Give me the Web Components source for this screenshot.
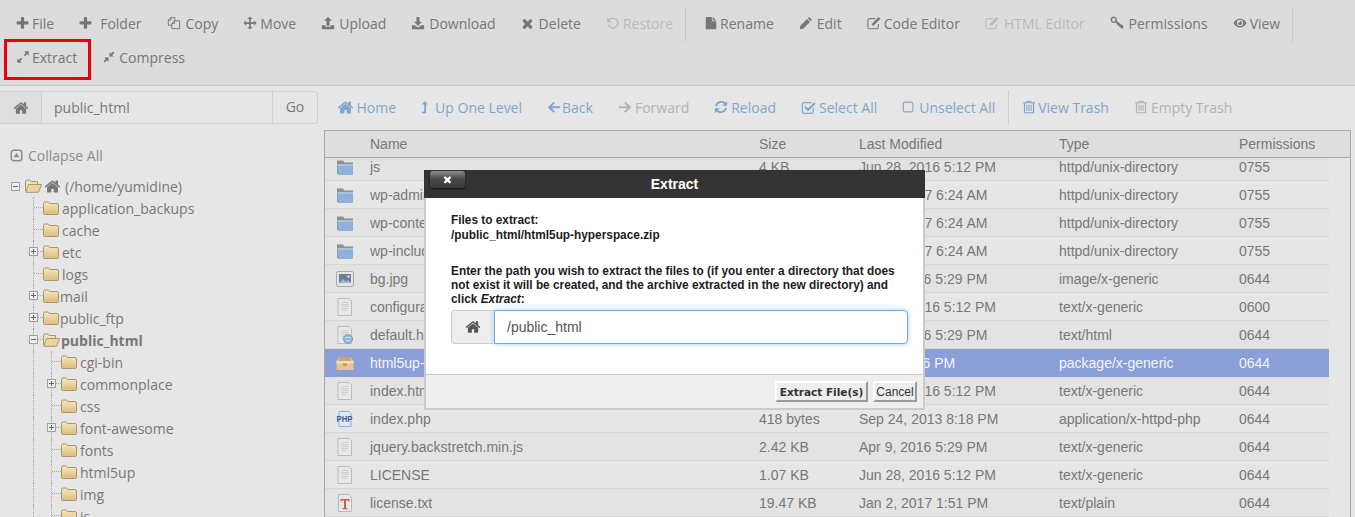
<!DOCTYPE html>
<html lang="en">
<head>
<meta charset="utf-8">
<title>File Manager</title>
<style>
  html, body { margin: 0; height: 517px; overflow: hidden; background: #e6e6e6; }
  body { font-family: "Open Sans", sans-serif; font-size: 14px; color: #777; position: relative; }
  fm-main { height: 387px; }
</style>
</head>
<body>
<fm-toolbar>
  <tool-item icon="plus" w="16" s="15">File</tool-item>
  <tool-item icon="plus" w="21" s="15">Folder</tool-item>
  <tool-item icon="copy" w="19">Copy</tool-item>
  <tool-item icon="move" w="17">Move</tool-item>
  <tool-item icon="upload" w="18">Upload</tool-item>
  <tool-item icon="download" w="18">Download</tool-item>
  <tool-item icon="times" w="18" s="15">Delete</tool-item>
  <tool-item icon="undo" w="17" disabled>Restore</tool-item>
  <tool-sep></tool-sep>
  <tool-item icon="file" w="16">Rename</tool-item>
  <tool-item icon="pencil" w="18">Edit</tool-item>
  <tool-item icon="edit" w="17">Code Editor</tool-item>
  <tool-item icon="edit" w="19" disabled>HTML Editor</tool-item>
  <tool-item icon="key" w="19">Permissions</tool-item>
  <tool-item icon="eye" w="17">View</tool-item>
  <tool-sep></tool-sep>
  <tool-item icon="expand" w="16" marked>Extract</tool-item>
  <tool-item icon="compress" w="17">Compress</tool-item>
</fm-toolbar>

<fm-navbar>
  <path-form slot="path" value="public_html"></path-form>
  <nav-link icon="home" x="19" s="17">Home</nav-link>
  <nav-link icon="levelup" x="13" s="14">Up One Level</nav-link>
  <nav-link icon="left" x="14" s="14">Back</nav-link>
  <nav-link icon="right" x="16" s="14" disabled>Forward</nav-link>
  <nav-link icon="refresh" x="16" s="14">Reload</nav-link>
  <nav-link icon="check" x="17" s="15">Select All</nav-link>
  <nav-link icon="square" x="16" s="14">Unselect All</nav-link>
  <nav-sep></nav-sep>
  <nav-link icon="trash" x="15" s="14">View Trash</nav-link>
  <nav-link icon="trash" x="16" s="14" disabled>Empty Trash</nav-link>
</fm-navbar>

<fm-main>
  <fm-tree slot="tree">
    <tree-item level="0" toggle="minus" open home>(/home/yumidine)</tree-item>
    <tree-item level="1">application_backups</tree-item>
    <tree-item level="1">cache</tree-item>
    <tree-item level="1" toggle="plus">etc</tree-item>
    <tree-item level="1">logs</tree-item>
    <tree-item level="1" toggle="plus" tight>mail</tree-item>
    <tree-item level="1" toggle="plus" tight>public_ftp</tree-item>
    <tree-item level="1" toggle="minus" tight open bold>public_html</tree-item>
    <tree-item level="2">cgi-bin</tree-item>
    <tree-item level="2" toggle="plus">commonplace</tree-item>
    <tree-item level="2">css</tree-item>
    <tree-item level="2" toggle="plus">font-awesome</tree-item>
    <tree-item level="2">fonts</tree-item>
    <tree-item level="2">html5up</tree-item>
    <tree-item level="2">img</tree-item>
    <tree-item level="2">js</tree-item>
  </fm-tree>
  <file-table slot="files">
    <file-row kind="folder" name="js" size="4 KB" date="Jun 28, 2016 5:12 PM" type="httpd/unix-directory" perm="0755"></file-row>
    <file-row kind="folder" name="wp-admin" size="4 KB" date="Jan 2, 2017 6:24 AM" type="httpd/unix-directory" perm="0755" alt></file-row>
    <file-row kind="folder" name="wp-content" size="4 KB" date="Jan 2, 2017 6:24 AM" type="httpd/unix-directory" perm="0755"></file-row>
    <file-row kind="folder" name="wp-includes" size="12 KB" date="Jan 2, 2017 6:24 AM" type="httpd/unix-directory" perm="0755" alt></file-row>
    <file-row kind="image" name="bg.jpg" size="89 KB" date="Apr 9, 2016 5:29 PM" type="image/x-generic" perm="0644"></file-row>
    <file-row kind="doc" name="configuration.php" size="1 KB" date="Jun 28, 2016 5:12 PM" type="text/x-generic" perm="0600" alt></file-row>
    <file-row kind="web" name="default.html" size="2 KB" date="Apr 9, 2016 5:29 PM" type="text/html" perm="0644"></file-row>
    <file-row kind="box" name="html5up-hyperspace.zip" size="1 MB" date="Today, 1:26 PM" type="package/x-generic" perm="0644" selected></file-row>
    <file-row kind="doc" name="index.html" size="6 KB" date="Jun 28, 2016 5:12 PM" type="text/x-generic" perm="0644"></file-row>
    <file-row kind="php" name="index.php" size="418 bytes" date="Sep 24, 2013 8:18 PM" type="application/x-httpd-php" perm="0644" alt></file-row>
    <file-row kind="doc" name="jquery.backstretch.min.js" size="2.42 KB" date="Apr 9, 2016 5:29 PM" type="text/x-generic" perm="0644"></file-row>
    <file-row kind="doc" name="LICENSE" size="1.07 KB" date="Jun 28, 2016 5:12 PM" type="text/x-generic" perm="0644" alt></file-row>
    <file-row kind="text" name="license.txt" size="19.47 KB" date="Jan 2, 2017 1:51 PM" type="text/plain" perm="0644"></file-row>
  </file-table>
</fm-main>

<extract-dialog></extract-dialog>

<script>
(function() {
  // font-awesome 4 outlines live on a 1792 grid, the rest are drawn on a 16 grid
  const fa = d => `<path transform="scale(.00893)" d="${d}"/>`;
  const HOME = 'M1472 992v480q0 26-19 45t-45 19h-384v-384h-256v384h-384q-26 0-45-19t-19-45v-480q0-1 .5-3t.5-3l575-474 575 474q1 2 1 6zm223-69l-62 74q-8 9-21 11h-3q-13 0-21-7l-692-577-692 577q-12 8-24 7-13-2-21-11l-62-74q-8-10-7-23.5t11-21.5l719-599q32-26 76-26t76 26l244 204v-195q0-14 9-23t23-9h192q14 0 23 9t9 23v408l219 182q10 8 11 21.5t-7 23.5z';
  const ICONS = {
    home: fa(HOME),
    plus: fa('M1600 736v192q0 40-28 68t-68 28h-416v416q0 40-28 68t-68 28h-192q-40 0-68-28t-28-68v-416h-416q-40 0-68-28t-28-68v-192q0-40 28-68t68-28h416v-416q0-40 28-68t68-28h192q40 0 68 28t28 68v416h416q40 0 68 28t28 68z'),
    times: fa('M1490 1322q0 40-28 68l-136 136q-28 28-68 28t-68-28l-294-294-294 294q-28 28-68 28t-68-28l-136-136q-28-28-28-68t28-68l294-294-294-294q-28-28-28-68t28-68l136-136q28-28 68-28t68 28l294 294 294-294q28-28 68-28t68 28l136 136q28 28 28 68t-28 68l-294 294 294 294q28 28 28 68z'),
    copy: '<g fill="none" stroke="currentColor" stroke-width="1.1"><path d="M6.5 1.5h-2l-3 3v6h4"/><path d="M4.5 1.6v3h-3"/><path d="M8.5 5.5h6v9h-9v-6l3-3z"/><path d="M8.5 5.6v3h-3"/></g><path d="M6.5 1.5h3v4h-1v-3h-2z"/>',
    move: '<path d="M8 .5l3 3H9v3.5h3.5V5l3 3-3 3V9H9v3.5h2l-3 3-3-3h2V9H3.5v2l-3-3 3-3v2H7V3.500H5z"/>',
    upload: '<path d="M8 1l4.500 4.500H9.700V11H6.300V5.500H3.500z"/><path d="M1 10.500h4v1.800h6v-1.800h4V15H1z"/>',
    download: '<path d="M6.300 1h3.400v5.500h2.800L8 11.500 3.500 6.500h2.800z"/><path d="M1 10.500h3.200L8 13.500l3.800-3H15V15H1z"/>',
    undo: '<path fill="none" stroke="currentColor" stroke-width="1.900" d="M4 4.200a5.600 5.600 0 1 1-1.300 5.800"/><path d="M1.500 1.800L7 7H1.500z"/>',
    file: '<path d="M2 1h7v5h5v9H2z"/><path d="M10 1l4 4h-4z"/>',
    pencil: '<path d="M11.500 1.200l3.300 3.300-1.500 1.500L10 2.700zM9.200 3.500l3.300 3.300-7.700 7.700L1 15l.5-3.800z"/>',
    edit: '<g fill="none" stroke="currentColor" stroke-width="1.200"><path d="M13 9v3.500a2 2 0 0 1-2 2H3a2 2 0 0 1-2-2V5a2 2 0 0 1 2-2h6.500"/></g><path d="M13.300 1.200l2 2-7 7L5.500 11l.8-2.800z"/>',
    key: '<path fill="none" stroke="currentColor" stroke-width="1.600" d="M4.200 1.500a2.800 2.800 0 1 0 .01 0z"/><path d="M6 6.200l1.300-1.200L12 9.500l2.800 1.200.7 3-2.800.5-1-1.800-1.300-.2-.2-1.300-1.300-.3z"/>',
    eye: '<path fill-rule="evenodd" d="M8 3c3.300 0 6 2 7.500 5-1.500 3-4.200 5-7.500 5S2 11 .5 8C2 5 4.700 3 8 3zm0 1.400A3.600 3.600 0 1 0 8 11.600 3.600 3.600 0 0 0 8 4.400zM7.800 5.600a2.400 2.400 0 1 1-2.200 2.200h2.200z"/>',
    expand: '<path d="M9.500 1.500h5v5l-1.800-1.800-2.500 2.500-1.400-1.400 2.500-2.500zM6.500 14.500h-5v-5l1.800 1.800 2.500-2.500 1.400 1.400-2.500 2.500z"/>',
    compress: '<path d="M8.500 7.500v-5l1.800 1.800 2.500-2.500 1.400 1.400-2.500 2.500 1.800 1.800zM7.500 8.500v5l-1.800-1.800-2.500 2.500-1.400-1.400 2.500-2.500-1.800-1.800z"/>',
    levelup: '<path d="M4.500 1L8 5.200H5.800V15H1v-1.600h2.600V5.200H1z"/>',
    left: '<path d="M7.500 2l1.500 1.500L5.400 7H15v2.400H5.400L9 13l-1.500 1.500L.8 8.200z"/>',
    right: '<path d="M8.500 2L7 3.500 10.600 7H1v2.400h9.600L7 13l1.500 1.500 6.700-6.300z"/>',
    refresh: '<path fill="none" stroke="currentColor" stroke-width="2.200" d="M2.300 7A6 6 0 0 1 12.500 4M13.700 9A6 6 0 0 1 3.500 12"/><path d="M15 1v5.500H9.500zM1 15V9.500h5.500z"/>',
    check: '<path fill="none" stroke="currentColor" stroke-width="1.300" d="M13 8.500v4a1.800 1.800 0 0 1-1.800 1.800H3.300a1.800 1.800 0 0 1-1.800-1.800V4.500a1.800 1.800 0 0 1 1.800-1.800h8"/><path d="M14 2.500l1.500 1.500-8 8-4-4L5 6.500l2.500 2.500z"/>',
    square: '<rect x="1.500" y="2.500" width="11" height="11" rx="2" fill="none" stroke="currentColor" stroke-width="1.300"/>',
    trash: '<path fill-rule="evenodd" d="M5.500 .8h5l.8 1.700H15v1.300h-1.200V15.200H2.200V3.800H1V2.500h3.700zM3.500 3.800v10.100h9V3.800zM6 2.500h4L9.700 2H6.300z"/><path d="M5 5.500h1.200v7H5zM7.400 5.500h1.200v7H7.400zM9.800 5.500H11v7H9.800z"/>',
    collapse: '<rect x="1.500" y="1.500" width="13" height="13" rx="3" fill="none" stroke="currentColor" stroke-width="1.800"/><path d="M8 5l3.500 5h-7z"/>'
  };

  class FaIcon extends HTMLElement {
    constructor() {
      super();
      this.attachShadow({ mode: 'open' });
      const size = this.getAttribute('size') || 14;
      this.shadowRoot.innerHTML = `
        <style>
          :host { display: inline-flex; flex: none; }
          svg { display: block; fill: currentColor; }
        </style>
        <svg width="${size}" height="${size}" viewBox="0 0 16 16">${ICONS[this.getAttribute('name')] || ''}</svg>`;
    }
  }
  customElements.define('fa-icon', FaIcon);

  class FmToolbar extends HTMLElement {
    constructor() {
      super();
      this.attachShadow({ mode: 'open' }).innerHTML = `
        <style>
          :host {
            display: flex;
            flex-wrap: wrap;
            box-sizing: border-box;
            height: 86px;
            padding: 6px 0 0 3.5px;
            background: #dcdcdc;
            border-bottom: 1px solid #c8c8c8;
            align-content: flex-start;
          }
        </style>
        <slot></slot>`;
    }
  }
  customElements.define('fm-toolbar', FmToolbar);

  class ToolItem extends HTMLElement {
    constructor() {
      super();
      const w = this.getAttribute('w') || 16;
      const s = this.getAttribute('s') || 14;
      this.attachShadow({ mode: 'open' }).innerHTML = `
        <style>
          :host {
            display: flex;
            align-items: center;
            position: relative;
            height: 34px;
            padding: 0 12.5px;
            color: #767676;
            font: 14px "Open Sans", sans-serif;
            white-space: nowrap;
          }
          :host([disabled]) { color: #b9b9b9; }
          .i { display: flex; width: ${w}px; flex: none; }
          fa-icon { margin-left: ${s > 14 ? -1 : 0}px; }
          :host([marked])::after {
            content: "";
            position: absolute;
            left: .5px;
            right: -1.5px;
            top: -1px;
            bottom: -6px;
            border: 3px solid #e8000c;
          }
        </style>
        <span class="i"><fa-icon name="${this.getAttribute('icon')}" size="${s}"></fa-icon></span><slot></slot>`;
    }
  }
  customElements.define('tool-item', ToolItem);

  class ToolSep extends HTMLElement {
    constructor() {
      super();
      this.attachShadow({ mode: 'open' }).innerHTML = `
        <style>
          :host {
            display: block;
            width: 1px;
            height: 34px;
            margin: 2px 6px -2px -1px;
            background: #c9c9c9;
          }
        </style>`;
    }
  }
  customElements.define('tool-sep', ToolSep);

  class FmNavbar extends HTMLElement {
    constructor() {
      super();
      this.attachShadow({ mode: 'open' }).innerHTML = `
        <style>
          :host {
            display: flex;
            align-items: center;
            box-sizing: border-box;
            height: 44px;
            background: #e6e6e6;
          }
          .links { display: flex; align-items: center; margin: -2px 0 0 6.5px; }
        </style>
        <slot name="path"></slot>
        <div class="links"><slot></slot></div>`;
    }
  }
  customElements.define('fm-navbar', FmNavbar);

  class PathForm extends HTMLElement {
    constructor() {
      super();
      this.attachShadow({ mode: 'open' }).innerHTML = `
        <style>
          :host {
            display: flex;
            box-sizing: border-box;
            width: 318px;
            height: 33px;
            margin-top: -1px;
            color: #777;
            font: 14px "Open Sans", sans-serif;
            border: 1px solid #d0d0d0;
            border-left: 0;
            border-radius: 0 4px 4px 0;
            background: #e6e6e6;
          }
          .home {
            display: flex;
            align-items: center;
            justify-content: center;
            width: 41px;
            color: #777;
            background: #dfdfdf;
            border-right: 1px solid #d0d0d0;
          }
          .val { flex: 1; padding-left: 12px; line-height: 32px; }
          .go {
            width: 44px;
            text-align: center;
            line-height: 30px;
            border-left: 1px solid #d0d0d0;
          }
        </style>
        <span class="home"><fa-icon name="home" size="16"></fa-icon></span>
        <span class="val">${this.getAttribute('value')}</span>
        <span class="go">Go</span>`;
    }
  }
  customElements.define('path-form', PathForm);

  class NavLink extends HTMLElement {
    constructor() {
      super();
      this.attachShadow({ mode: 'open' }).innerHTML = `
        <style>
          :host {
            display: flex;
            align-items: center;
            padding: 0 13px;
            color: #7fa6ca;
            font: 14px "Open Sans", sans-serif;
            white-space: nowrap;
          }
          :host([disabled]) { color: #b2b2b2; }
          .i { display: flex; width: ${this.getAttribute('x') || 16}px; flex: none; }
          fa-icon { margin-left: -1px; }
        </style>
        <span class="i"><fa-icon name="${this.getAttribute('icon')}" size="${this.getAttribute('s') || 14}"></fa-icon></span><slot></slot>`;
    }
  }
  customElements.define('nav-link', NavLink);

  class NavSep extends HTMLElement {
    constructor() {
      super();
      this.attachShadow({ mode: 'open' }).innerHTML = `
        <style>
          :host { display: block; width: 1px; height: 34px; background: #cdcdcd; margin-right: 1px; }
        </style>`;
    }
  }
  customElements.define('nav-sep', NavSep);

  class FmMain extends HTMLElement {
    constructor() {
      super();
      this.attachShadow({ mode: 'open' }).innerHTML = `
        <style>
          :host { display: flex; overflow: hidden; }
        </style>
        <slot name="tree"></slot>
        <slot name="files"></slot>`;
    }
  }
  customElements.define('fm-main', FmMain);

  class FmTree extends HTMLElement {
    constructor() {
      super();
      this.attachShadow({ mode: 'open' }).innerHTML = `
        <style>
          :host {
            display: block;
            flex: none;
            box-sizing: border-box;
            width: 324px;
            padding-top: 45px;
            overflow: hidden;
            color: #777;
            font: 14px "Open Sans", sans-serif;
          }
          .all {
            position: absolute;
            top: 145px;
            left: 10px;
            display: flex;
            align-items: center;
            gap: 5px;
            height: 20px;
            color: #8c8c8c;
          }
        </style>
        <div class="all"><fa-icon name="collapse" size="13"></fa-icon>Collapse All</div>
        <slot></slot>`;
    }
  }
  customElements.define('fm-tree', FmTree);

  const FOLDER = `<svg width="16" height="14" viewBox="0 0 16 14"><defs><linearGradient id="f" x1="0" y1="0" x2="0" y2="1"><stop offset="0" stop-color="#f6e7c0"/><stop offset="1" stop-color="#dcbd7c"/></linearGradient></defs><path d="M.5 2.500Q.5 1 2 1h3.500l1 1.500H14q1.500 0 1.500 1.500v8.500q0 1-1 1h-13q-1 0-1-1z" fill="url(#f)" stroke="#a89872"/></svg>`;
  const FOLDER_OPEN = `<svg width="17" height="14" viewBox="0 0 17 14"><path d="M.5 12V2.500Q.5 1 2 1h3l1 1.500h6.500V5" fill="#efe0bb" stroke="#a89872"/><path d="M.8 13.300L3.500 5.500h13l-3 7.800z" fill="#ecd49a" stroke="#a89872"/></svg>`;

  class TreeItem extends HTMLElement {
    constructor() {
      super();
      const level = +this.getAttribute('level');
      const toggle = this.getAttribute('toggle');
      const box = toggle ? `<span class="box">${toggle === 'plus' ? '<i class="v"></i>' : ''}<i class="h"></i></span>` : '';
      // one dotted guide per open ancestor, the last one carries the tick and the toggle
      let guides = '';
      for (let n = 1; n <= level; n++) {
        guides += n === level ? `<span class="g last">${box}</span>` : '<span class="g"></span>';
      }
      const rootBox = level === 0 ? `<span class="rootbox">${box}</span>` : '';
      this.attachShadow({ mode: 'open' }).innerHTML = `
        <style>
          :host {
            display: flex;
            align-items: center;
            height: 22px;
            padding-left: ${level === 0 ? 11 : 33}px;
            white-space: nowrap;
          }
          :host([bold]) { font-weight: 700; }
          .g {
            position: relative;
            box-sizing: border-box;
            width: 18px;
            height: 22px;
            flex: none;
            border-left: 1px dotted #a8a8a8;
          }
          .g.last { width: 10px; }
          .g.last::after {
            content: "";
            position: absolute;
            left: 0;
            top: 10px;
            width: 9px;
            border-top: 1px dotted #a8a8a8;
          }
          .box {
            position: absolute;
            z-index: 1;
            left: -5px;
            top: 6px;
            box-sizing: border-box;
            width: 9px;
            height: 9px;
            background: #efefef;
            border: 1px solid #a0a0a0;
          }
          .rootbox { position: relative; width: 14px; height: 9px; flex: none; }
          .rootbox .box { left: 0; top: 0; }
          .h, .v { position: absolute; background: #666; }
          .h { left: 1px; top: 3px; width: 5px; height: 1px; }
          .v { left: 3px; top: 1px; width: 1px; height: 5px; }
          .f { display: flex; flex: none; }
          .hm { display: flex; margin-left: 2px; color: #777; }
          .t { margin-left: ${level === 0 ? 4 : 3}px; }
          :host([tight]) .t { margin-left: 1px; }
        </style>
        ${rootBox}${guides}
        <span class="f">${this.hasAttribute('open') ? FOLDER_OPEN : FOLDER}</span>
        ${this.hasAttribute('home') ? '<span class="hm"><fa-icon name="home" size="17"></fa-icon></span>' : ''}
        <span class="t"><slot></slot></span>`;
    }
  }
  customElements.define('tree-item', TreeItem);

  class FileTable extends HTMLElement {
    constructor() {
      super();
      this.attachShadow({ mode: 'open' }).innerHTML = `
        <style>
          :host {
            --cols: 45px 389px 100px 200px 180px 1fr;
            display: flex;
            flex-direction: column;
            flex: none;
            box-sizing: border-box;
            width: 1027px;
            margin-right: 4px;
            border: 1px solid #a9a9a9;
            border-bottom: 0;
            color: #777;
            font: 14px "Liberation Sans", Arial, sans-serif;
            overflow: hidden;
            background: #e6e6e6;
          }
          .head {
            position: relative;
            z-index: 1;
            display: grid;
            grid-template-columns: var(--cols);
            align-items: center;
            flex: none;
            height: 26px;
            background: #dedede;
            border-bottom: 1px solid #a9a9a9;
          }
          .body { margin-top: -5px; width: 1004px; }
        </style>
        <div class="head"><span></span><span>Name</span><span>Size</span><span>Last Modified</span><span>Type</span><span>Permissions</span></div>
        <div class="body"><slot></slot></div>`;
    }
  }
  customElements.define('file-table', FileTable);

  const DOC_LINES = '<path d="M5.500 4.500h7M5.500 6.500h7M5.500 8.500h7M5.500 10.500h7M5.500 12.500h5" stroke="#cdcdcd" stroke-width="1.200"/>';
  const DOC = `<path d="M2 .5h11l2.500 2.500v14.500H2z" fill="#e8e8e8" stroke="#bdbdbd"/>${DOC_LINES}`;
  const FILE_ICONS = {
    folder: `<path d="M1 2.500h6l1.500 2H17V16H1z" fill="#8f8f8f"/><path d="M1.500 6H17v11H2z" fill="#8fb0d8"/><path d="M1.500 6H17v2H1.700z" fill="#a7c3e4"/>`,
    image: `<rect x=".5" y="1.500" width="17" height="15" rx="1.500" fill="#e4e4e4" stroke="#aaa"/><rect x="3" y="4" width="12" height="9" fill="#6d7d98"/><path d="M3 13l4-4 3 2.500 2-1.500 3 3z" fill="#aab4c8"/><circle cx="12.500" cy="6.500" r="1.300" fill="#d8d8d8"/>`,
    doc: DOC,
    web: `${DOC}<circle cx="12" cy="13" r="4.500" fill="#8fb2de" stroke="#7a9cc8"/><path d="M9 12q3-2 6 0M10 15q2-1 4 0" stroke="#d8e6f6" fill="none"/>`,
    box: `<path d="M3.500 3h11l3 4v9h-17V7z" fill="#e4c592"/><path d="M.5 7h17v2.500H.5z" fill="#f3dfb8"/><path d="M3.500 3h11l1 4h-13z" fill="#c9a66d"/><path d="M7 9.500h4v2H7z" fill="#b08d58"/>`,
    php: `<path d="M3 1.500h10l2 2v13H3z" fill="#dfe8f4" stroke="#8eaed4"/><text x="8.500" y="12" text-anchor="middle" font-family="Liberation Sans, sans-serif" font-size="9" font-weight="700" textLength="16" lengthAdjust="spacingAndGlyphs" fill="#3d5c94">PHP</text>`,
    text: `<path d="M2.500 .5h10l3 3v14h-13z" fill="#e8e8e8" stroke="#b8b8b8"/><path d="M4.500 5h9v2.500H12.500V6.400H10V14h1.500v1.200h-5V14H8V6.400H5.500v1.100h-1z" fill="#c8604c"/>`
  };

  class FileRow extends HTMLElement {
    constructor() {
      super();
      const a = n => this.getAttribute(n);
      this.attachShadow({ mode: 'open' }).innerHTML = `
        <style>
          :host {
            display: grid;
            grid-template-columns: var(--cols);
            align-items: center;
            box-sizing: border-box;
            height: 28px;
            white-space: nowrap;
            background: #e3e3e3;
            border-bottom: 1px solid #d6d6d6;
          }
          :host([alt]) { background: #e6e6e6; }
          :host([selected]) { background: #8a9ed8; color: #f4f6fc; border-bottom-color: #8a9ed8; }
          .ic { display: flex; padding-left: 11px; }
        </style>
        <span class="ic"><svg width="18" height="18" viewBox="0 0 18 18">${FILE_ICONS[a('kind')]}</svg></span>
        <span>${a('name')}</span>
        <span>${a('size')}</span>
        <span>${a('date')}</span>
        <span>${a('type')}</span>
        <span>${a('perm')}</span>`;
    }
  }
  customElements.define('file-row', FileRow);

  class ExtractDialog extends HTMLElement {
    constructor() {
      super();
      this.attachShadow({ mode: 'open' }).innerHTML = `
        <style>
          :host {
            position: absolute;
            left: 424px;
            top: 170px;
            display: flex;
            flex-direction: column;
            box-sizing: border-box;
            width: 501px;
            height: 240px;
            color: #1c1c1c;
            font: 11.850px/14px "Liberation Sans", Arial, sans-serif;
            background: #fff;
            border: 2px solid #cbcbcb;
            border-top: 0;
          }
          .bar {
            position: relative;
            flex: none;
            height: 28px;
            margin: 0 -2px;
            color: #fff;
            font-size: 14px;
            font-weight: 700;
            line-height: 28px;
            text-align: center;
            background: #333;
          }
          .close {
            position: absolute;
            left: 6px;
            top: 1px;
            width: 35px;
            height: 17px;
            box-sizing: border-box;
            display: flex;
            align-items: center;
            justify-content: center;
            color: #fff;
            background: linear-gradient(#8c8c8c, #4a4a4a 45%, #3a3a3a);
            border-radius: 3px;
            box-shadow: 0 1px 2px #111;
          }
          .body { flex: 1; padding: 15px 15px 0 25px; font-weight: 700; }
          .body p { margin: 0; }
          .body p.files { margin: 1px 0 22px; }
          em { font-style: italic; }
          .group { display: flex; height: 34px; margin-top: 4px; }
          .add {
            display: flex;
            align-items: center;
            justify-content: center;
            box-sizing: border-box;
            width: 43px;
            color: #555;
            background: #eee;
            border: 1px solid #ccc;
            border-right: 0;
            border-radius: 4px 0 0 4px;
          }
          .input {
            flex: 1;
            box-sizing: border-box;
            padding-left: 12px;
            color: #555;
            font-size: 14px;
            font-weight: 400;
            line-height: 32px;
            border: 1px solid #66afe9;
            border-radius: 0 4px 4px 0;
            box-shadow: 0 0 5px rgba(102, 175, 233, .6);
          }
          .foot {
            display: flex;
            flex: none;
            justify-content: flex-end;
            align-items: center;
            gap: 5px;
            box-sizing: border-box;
            height: 34px;
            padding-right: 6px;
            background: #eee;
            border-top: 1px solid #ccc;
          }
          button {
            height: 21px;
            padding: 0;
            color: #333;
            background: #ededed;
            border: 2px solid;
            border-color: #fff #9a9a9a #9a9a9a #fff;
            font: 12px "Liberation Sans", Arial, sans-serif;
          }
          .ok { width: 93px; font: 700 10.500px "DejaVu Sans", sans-serif; }
          .no { width: 44px; }
        </style>
        <div class="bar">
          <span class="close"><fa-icon name="times" size="11"></fa-icon></span>
          Extract
        </div>
        <div class="body">
          <p>Files to extract:</p>
          <p class="files">/public_html/html5up-hyperspace.zip</p>
          <p>Enter the path you wish to extract the files to (if you enter a directory that does not exist it will be created, and the archive extracted in the new directory) and click <em>Extract</em>:</p>
          <div class="group">
            <span class="add"><fa-icon name="home" size="16"></fa-icon></span>
            <div class="input">/public_html</div>
          </div>
        </div>
        <div class="foot">
          <button class="ok">Extract File(s)</button>
          <button class="no">Cancel</button>
        </div>`;
    }
  }
  customElements.define('extract-dialog', ExtractDialog);
})();
</script>
</body>
</html>
